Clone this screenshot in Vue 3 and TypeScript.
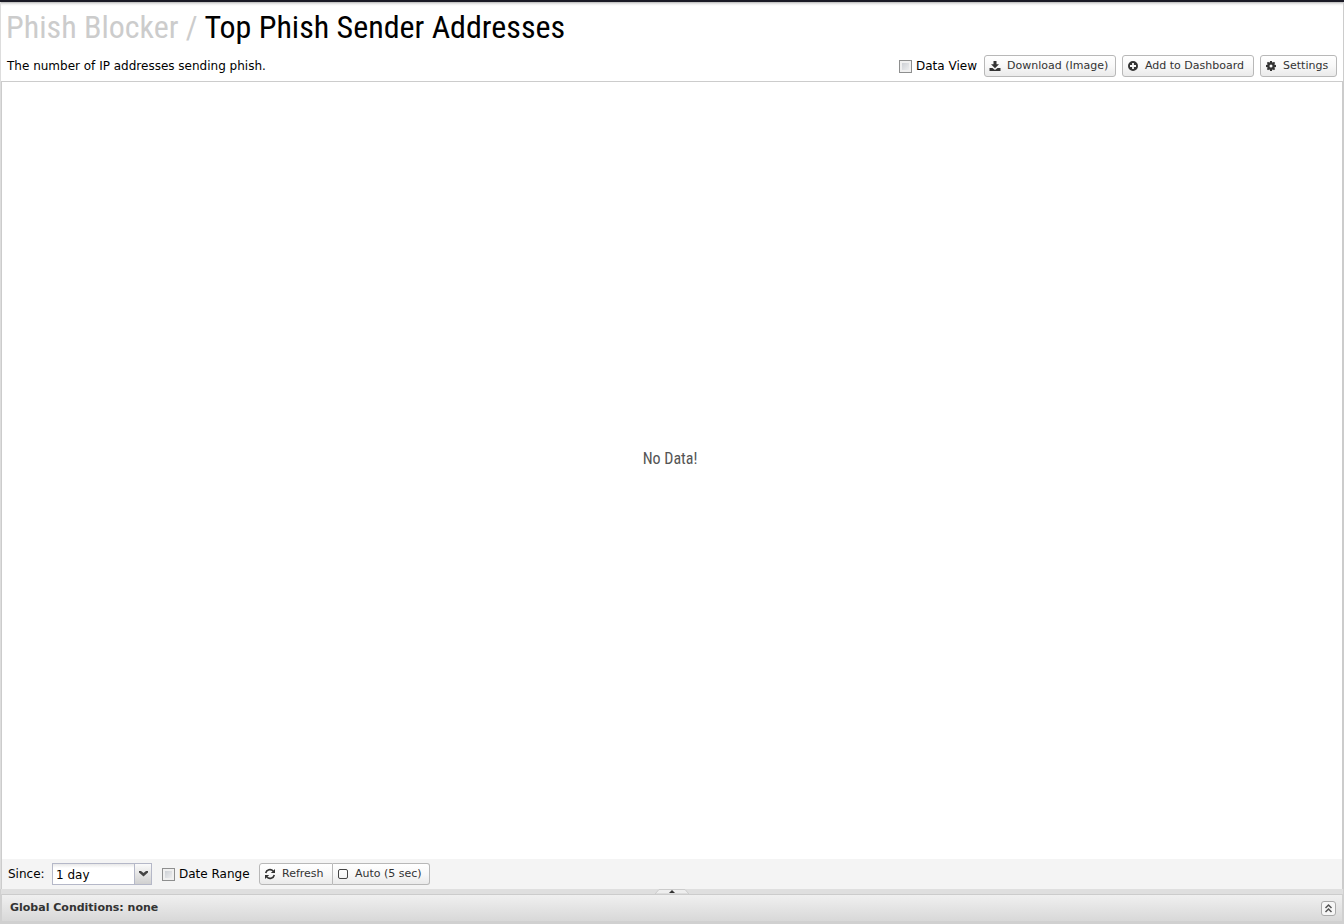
<script setup lang="ts">
import { ref } from 'vue'

const dataView = ref(false)
const dateRange = ref(false)
const auto = ref(false)
const since = ref('1 day')
const periods: string[] = ['1 hour', '6 hours', '1 day', '1 week', '1 month']
</script>

<template>
  <div class="app">
    <main class="report">
      <header class="head">
        <h1 class="title"><a class="crumb" href="#">Phish Blocker /</a> Top Phish Sender Addresses</h1>
        <div class="toolbar">
          <p class="description">The number of IP addresses sending phish.</p>
          <label class="check"><input v-model="dataView" type="checkbox" />Data View</label>
          <button class="btn wide" type="button">
            <svg class="icon" viewBox="0 0 12 12" aria-hidden="true">
              <path d="M4.500 1h3v3.200H10L6 8.200 2 4.200h2.500z" />
              <path d="M.5 8h3L6 10l2.500-2h3v3H.5z" />
            </svg>
            Download (Image)
          </button>
          <button class="btn wide" type="button">
            <svg class="icon" viewBox="0 0 12 12" aria-hidden="true">
              <path d="M6 1a5 5 0 1 0 0 10A5 5 0 0 0 6 1zM5.1 3h1.8v2.1H9v1.8H6.9V9H5.1V6.9H3V5.1h2.1z" fill-rule="evenodd" />
            </svg>
            Add to Dashboard
          </button>
          <button class="btn settings" type="button">
            <svg class="icon" viewBox="0 0 12 12" aria-hidden="true">
              <path d="M5.1 1h1.8l.3 1.3.7.3L9 1.8 10.2 3l-.8 1.1.3.7 1.3.3v1.8l-1.3.3-.3.7.8 1.1L9 10.2l-1.1-.8-.7.3L6.9 11H5.1l-.3-1.3-.7-.3L3 10.200 1.8 9l.8-1.1-.3-.7L1 6.9V5.1l1.3-.3.3-.7L1.8 3 3 1.8l1.1.8.7-.3zM6 4.500a1.500 1.500 0 1 0 0 3 1.500 1.500 0 0 0 0-3z" fill-rule="evenodd" />
            </svg>
            Settings
          </button>
        </div>
      </header>

      <section class="chart"><span>No Data!</span></section>

      <footer class="range">
        <label class="since" for="since">Since:</label>
        <div class="combo">
          <select id="since" v-model="since">
            <option v-for="p in periods" :key="p">{{ p }}</option>
          </select>
          <span class="trigger">
            <svg viewBox="0 0 9 6" aria-hidden="true"><path d="M0 0h2l2.500 2L7 0h2v1.500L4.500 5.500 0 1.500z" /></svg>
          </span>
        </div>
        <label class="check range-check"><input v-model="dateRange" type="checkbox" />Date Range</label>
        <div class="group">
          <button class="btn refresh-btn" type="button">
            <svg class="icon refresh" viewBox="0 0 12 12" aria-hidden="true">
              <path d="M1.700 5A4.400 4.400 0 0 1 9.200 3M10.300 7a4.400 4.400 0 0 1-7.500 2" />
              <path class="solid" d="M11 .9v4.200H6.800zM1 11.100V6.900h4.200z" />
            </svg>
            Refresh
          </button>
          <button class="btn auto-btn" type="button" :aria-pressed="auto" @click="auto = !auto">
            <svg class="icon box" viewBox="0 0 12 12" aria-hidden="true">
              <rect x="1.500" y="1.500" width="9" height="9" rx="1.500" />
            </svg>
            Auto (5 sec)
          </button>
        </div>
      </footer>
    </main>

    <div class="splitter">
      <button class="handle" type="button" aria-label="Expand conditions">
        <svg viewBox="0 0 34 5" aria-hidden="true">
          <path class="tab" d="M0 5L4 .5h26L34 5z" />
          <path class="arrow" d="M14 4h6L17 1z" />
        </svg>
      </button>
    </div>

    <section class="conditions">
      <h2>Global Conditions: none</h2>
      <button class="expand" type="button" aria-label="Show conditions">
        <svg viewBox="0 0 13 13" aria-hidden="true"><path d="M3.500 6L6.500 3l3 3M3.500 10L6.500 7l3 3" /></svg>
      </button>
    </section>
  </div>
</template>

<style>
body {
  background: #fff;
}
</style>

<style scoped>
.app {
  display: flex;
  flex-direction: column;
  box-sizing: border-box;
  min-height: 100vh;
  border-top: 2px solid #1b1b26;
  background: #d0d0d0;
  color: #000;
  font: 12px/16px "DejaVu Sans", sans-serif;
}
.report {
  display: flex;
  flex: 1;
  flex-direction: column;
  border-right: 1px solid #ccc;
  border-left: 1px solid #ddd;
  background: #fff;
}
.head {
  background: linear-gradient(#b8b8b8, #eee 2px, #fff 4px);
}
.title {
  margin: 0;
  padding: 5px 5px 0;
  font: 400 32px/40px "Roboto Condensed", "Liberation Sans Narrow", Roboto, sans-serif;
}
.crumb {
  color: #ccc;
  text-decoration: none;
}
.toolbar {
  display: flex;
  align-items: center;
  gap: 6px;
  height: 22px;
  padding: 8px 6px 4px;
}
.description {
  flex: 1;
  margin: 0;
}
.check {
  display: flex;
  align-items: center;
  min-width: 79px;
  gap: 4px;
}
.range-check {
  min-width: 91px;
}
.check input {
  width: 13px;
  height: 13px;
  margin: 1px 0 0;
  appearance: none;
  border: 1px solid #8e8f8f;
  background: linear-gradient(135deg, #c4c8ce, #f6f6f6);
  box-shadow: inset 0 0 0 2px #f0f0f0;
}
.check input:checked {
  background: #456;
}
.btn {
  display: flex;
  align-items: center;
  box-sizing: border-box;
  height: 22px;
  gap: 6px;
  padding: 0 5px 0 4px;
  border: 1px solid #b8b8b8;
  border-radius: 3px;
  background: linear-gradient(#fff, #f8f8f8 50%, #eaeaea);
  color: #333;
  font: 11px/14px "DejaVu Sans", sans-serif;
}
.wide {
  min-width: 132px;
}
.settings {
  min-width: 77px;
}
.refresh-btn {
  min-width: 74px;
}
.auto-btn {
  min-width: 97px;
}
.icon {
  width: 12px;
  height: 12px;
  fill: #333;
}
.refresh {
  fill: none;
  stroke: #333;
  stroke-width: 1.6;
}
.refresh .solid {
  fill: #333;
  stroke: none;
}
.box {
  fill: none;
  stroke: #444;
  stroke-width: 1;
}
.chart {
  display: flex;
  flex: 1;
  align-items: center;
  justify-content: center;
  border: 1px solid #ccc;
  border-bottom: 0;
  color: #555;
  font: 16px/20px "Roboto Condensed", "Liberation Sans Narrow", Roboto, sans-serif;
}
.chart span {
  padding: 0 4px 24px 0;
}
.range {
  display: flex;
  align-items: center;
  height: 30px;
  padding: 0 6px;
  border: solid #ccc;
  border-width: 0 1px;
  background: #f4f4f4;
  gap: 6px;
}
.since {
  min-width: 38px;
}
.combo {
  position: relative;
  width: 100px;
  height: 22px;
  margin-right: 4px;
}
.combo select {
  box-sizing: border-box;
  width: 100%;
  height: 100%;
  padding: 1px 20px 0 3px;
  appearance: none;
  border: 1px solid #b5b8c8;
  border-radius: 0;
  background: linear-gradient(#e8e8e8, #fff 4px);
  color: #000;
  font: 12px/16px "DejaVu Sans", sans-serif;
}
.trigger {
  position: absolute;
  top: 1px;
  right: 1px;
  bottom: 1px;
  display: flex;
  align-items: center;
  justify-content: center;
  width: 16px;
  border-left: 1px solid #b5b8c8;
  background: linear-gradient(#fafafa, #d0d0d0);
  pointer-events: none;
}
.trigger svg {
  width: 9px;
  height: 6px;
  fill: #444;
}
.group {
  display: flex;
}
.group .btn:first-child {
  border-radius: 3px 0 0 3px;
}
.group .btn:last-child {
  border-left: 0;
  border-radius: 0 3px 3px 0;
}
.splitter {
  display: flex;
  justify-content: center;
  height: 5px;
  margin: 0 1px;
  background: #dfdfdf;
}
.handle {
  display: flex;
  padding: 0;
  border: 0;
  background: none;
}
.handle svg {
  width: 34px;
  height: 5px;
}
.tab {
  fill: #eee;
  stroke: #ccc;
}
.arrow {
  fill: #333;
}
.conditions {
  display: flex;
  align-items: center;
  justify-content: space-between;
  box-sizing: border-box;
  height: 27px;
  margin: 0 2px 3px;
  padding: 0 6px 0 8px;
  border-top: 1px solid #ccc;
  background: linear-gradient(#f0f0f0, #d8d8d8);
}
.conditions h2 {
  margin: 0;
  color: #333;
  font: 700 11px/14px "DejaVu Sans", sans-serif;
}
.expand {
  display: flex;
  width: 15px;
  height: 15px;
  padding: 0;
  border: 1px solid #aaa;
  border-radius: 3px;
  background: #f6f6f6;
  box-sizing: border-box;
}
.expand svg {
  width: 13px;
  height: 13px;
  fill: none;
  stroke: #555;
  stroke-width: 1.5;
}
</style>
